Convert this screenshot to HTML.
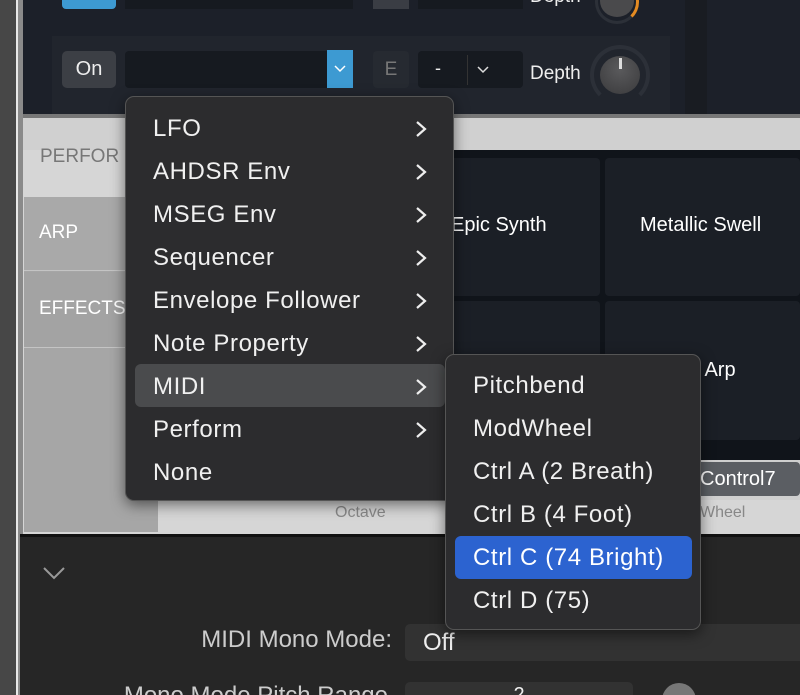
<!DOCTYPE html>
<html style="width:800px;height:695px;overflow:hidden"><head><style>
*{margin:0;padding:0;box-sizing:border-box}
body{width:800px;height:695px;overflow:hidden;position:relative;background:#d6d6d6;font-family:"Liberation Sans",sans-serif}
.a{position:absolute}
.menu{position:absolute;background:#2c2c2e;border:1px solid #555;border-radius:9px;box-shadow:0 4px 14px rgba(0,0,0,.5)}
.it{position:absolute;left:0;right:0;height:43px;line-height:43px;color:#f0f0f0;font-size:24px;letter-spacing:0.6px;padding-left:27px;white-space:nowrap}
.ch{position:absolute;right:26px;top:13px;width:12px;height:18px}
</style></head><body>
<div class="a" style="left:0;top:0;width:16px;height:695px;background:#474747"></div>
<div class="a" style="left:16px;top:0;width:2px;height:695px;background:#e8e8e8"></div>
<div class="a" style="left:18px;top:0;width:5px;height:695px;background:#8a8a8a"></div>
<div class="a" style="left:23px;top:0;width:777px;height:116px;background:#1c2029"></div>
<div class="a" style="left:23px;top:114px;width:777px;height:4px;background:#777"></div>
<div class="a" style="left:52px;top:36px;width:618px;height:78px;background:#21252d"></div>
<div class="a" style="left:685px;top:0;width:22px;height:114px;background:#191c22"></div>
<div class="a" style="left:62px;top:0;width:54px;height:9px;background:#3d9ad2;border-radius:0 0 4px 4px"></div>
<div class="a" style="left:125px;top:0;width:228px;height:9px;background:#161a20"></div>
<div class="a" style="left:373px;top:0;width:36px;height:9px;background:#3a3d44"></div>
<div class="a" style="left:418px;top:0;width:105px;height:9px;background:#161a20"></div>
<div class="a" style="left:530px;top:-14px;color:#eee;font-size:19px">Depth</div>
<div class="a" style="left:595px;top:-20px;width:44px;height:44px;border-radius:50%;border:3px solid #2c3038;border-right-color:#e48b22"></div>
<div class="a" style="left:600px;top:-15px;width:34px;height:32px;border-radius:50%;background:#4a4a4c"></div>
<div class="a" style="left:62px;top:51px;width:54px;height:37px;background:#3c3f45;border-radius:5px;color:#eee;font-size:20px;line-height:37px;text-align:center">On</div>
<div class="a" style="left:125px;top:51px;width:228px;height:37px;background:#161a20;border-radius:4px"></div>
<div class="a" style="left:327px;top:50px;width:26px;height:38px;background:#3d9ad2"></div>
<svg class="a" style="left:334px;top:65px" width="12" height="8"><path d="M1 1 L6 6 L11 1" stroke="#fff" stroke-width="1.5" fill="none"/></svg>
<div class="a" style="left:373px;top:51px;width:36px;height:37px;background:#262a31;border-radius:4px;color:#777;font-size:19px;text-align:center;line-height:37px">E</div>
<div class="a" style="left:418px;top:51px;width:105px;height:37px;background:#161a20;border-radius:4px"></div>
<div class="a" style="left:435px;top:58px;color:#eee;font-size:18px">-</div>
<div class="a" style="left:467px;top:55px;width:1px;height:30px;background:#333"></div>
<svg class="a" style="left:477px;top:66px" width="12" height="8"><path d="M1 1 L6 6 L11 1" stroke="#ddd" stroke-width="1.5" fill="none"/></svg>
<div class="a" style="left:530px;top:63px;color:#eee;font-size:19px">Depth</div>
<div class="a" style="left:590px;top:45px;width:60px;height:60px;border-radius:50%;border:4px solid #2c3038;border-bottom-color:transparent"></div>
<div class="a" style="left:600px;top:56px;width:40px;height:38px;border-radius:50%;background:radial-gradient(circle at 50% 35%,#5a5a5c,#3a3a3c)"></div>
<div class="a" style="left:619px;top:58px;width:3px;height:11px;background:#ddd"></div>
<div class="a" style="left:23px;top:118px;width:777px;height:32px;background:#d0d0d0"></div>
<div class="a" style="left:40px;top:146px;color:#777;font-size:19px">PERFOR</div>
<div class="a" style="left:24px;top:197px;width:134px;height:335px;background:#a6a6a6"></div>
<div class="a" style="left:24px;top:197px;width:134px;height:74px;background:#a9a9a9;border-bottom:1px solid #c4c4c4"></div>
<div class="a" style="left:39px;top:222px;color:#fff;font-size:19px">ARP</div>
<div class="a" style="left:24px;top:272px;width:134px;height:76px;background:#a3a3a3;border-bottom:1px solid #c4c4c4"></div>
<div class="a" style="left:39px;top:298px;color:#fff;font-size:19px">EFFECTS</div>
<div class="a" style="left:158px;top:150px;width:642px;height:310px;background:#10141a"></div>
<div class="a" style="left:300px;top:158px;width:300px;height:138px;background:#1b1f26;border-radius:4px"></div>
<div class="a" style="left:605px;top:158px;width:195px;height:138px;background:#1b1f26;border-radius:4px"></div>
<div class="a" style="left:300px;top:301px;width:300px;height:139px;background:#1b1f26;border-radius:4px"></div>
<div class="a" style="left:605px;top:301px;width:195px;height:139px;background:#1b1f26;border-radius:4px"></div>
<div class="a" style="left:451px;top:214px;color:#fff;font-size:20px">Epic Synth</div>
<div class="a" style="left:640px;top:214px;color:#fff;font-size:20px">Metallic Swell</div>
<div class="a" style="left:690px;top:359px;color:#fff;font-size:20px">k Arp</div>
<div class="a" style="left:158px;top:460px;width:642px;height:40px;background:#cfcfcf"></div>
<div class="a" style="left:690px;top:462px;width:110px;height:34px;background:#5b5e63;border-radius:4px;color:#fff;font-size:20px;line-height:34px;padding-left:10px">Control7</div>
<div class="a" style="left:335px;top:504px;color:#888;font-size:16px">Octave</div>
<div class="a" style="left:700px;top:504px;color:#888;font-size:16px">Wheel</div>
<div class="a" style="left:20px;top:534px;width:780px;height:3px;background:#111"></div>
<div class="a" style="left:20px;top:537px;width:780px;height:158px;background:#262626"></div>
<svg class="a" style="left:42px;top:566px" width="24" height="14"><path d="M2 2 L12 12 L22 2" stroke="#999" stroke-width="2" fill="none"/></svg>
<div class="a" style="left:100px;top:626px;width:292px;text-align:right;color:#ccc;font-size:24px;white-space:nowrap">MIDI Mono Mode:</div>
<div class="a" style="left:405px;top:624px;width:400px;height:37px;background:#323232;border-radius:5px;color:#eee;font-size:24px;line-height:37px;padding-left:18px">Off</div>
<div class="a" style="left:90px;top:682px;width:298px;text-align:right;color:#ccc;font-size:24px;white-space:nowrap">Mono Mode Pitch Range</div>
<div class="a" style="left:405px;top:682px;width:228px;height:30px;background:#323232;border-radius:5px;color:#eee;font-size:20px;text-align:center;padding-top:2px">2</div>
<div class="a" style="left:662px;top:683px;width:34px;height:34px;border-radius:50%;background:#777"></div>
<div class="menu" style="left:125px;top:96px;width:329px;height:405px">
<div class="it" style="top:10px">LFO<svg class="ch"><path d="M2 2 L10 9 L2 16" stroke="#eee" stroke-width="2.2" fill="none"/></svg></div>
<div class="it" style="top:53px">AHDSR Env<svg class="ch"><path d="M2 2 L10 9 L2 16" stroke="#eee" stroke-width="2.2" fill="none"/></svg></div>
<div class="it" style="top:96px">MSEG Env<svg class="ch"><path d="M2 2 L10 9 L2 16" stroke="#eee" stroke-width="2.2" fill="none"/></svg></div>
<div class="it" style="top:139px">Sequencer<svg class="ch"><path d="M2 2 L10 9 L2 16" stroke="#eee" stroke-width="2.2" fill="none"/></svg></div>
<div class="it" style="top:182px">Envelope Follower<svg class="ch"><path d="M2 2 L10 9 L2 16" stroke="#eee" stroke-width="2.2" fill="none"/></svg></div>
<div class="it" style="top:225px">Note Property<svg class="ch"><path d="M2 2 L10 9 L2 16" stroke="#eee" stroke-width="2.2" fill="none"/></svg></div>
<div class="a" style="left:9px;top:267px;width:310px;height:43px;background:#4a4b4d;border-radius:6px"></div>
<div class="it" style="top:268px">MIDI<svg class="ch"><path d="M2 2 L10 9 L2 16" stroke="#eee" stroke-width="2.2" fill="none"/></svg></div>
<div class="it" style="top:311px">Perform<svg class="ch"><path d="M2 2 L10 9 L2 16" stroke="#eee" stroke-width="2.2" fill="none"/></svg></div>
<div class="it" style="top:354px">None</div>
</div>
<div class="menu" style="left:445px;top:354px;width:256px;height:276px">
<div class="it" style="top:9px">Pitchbend</div>
<div class="it" style="top:52px">ModWheel</div>
<div class="it" style="top:95px">Ctrl A (2 Breath)</div>
<div class="it" style="top:138px">Ctrl B (4 Foot)</div>
<div class="a" style="left:9px;top:181px;width:237px;height:43px;background:#2c63d0;border-radius:6px"></div>
<div class="it" style="top:181px;color:#fff">Ctrl C (74 Bright)</div>
<div class="it" style="top:224px">Ctrl D (75)</div>
</div>
</body></html>
